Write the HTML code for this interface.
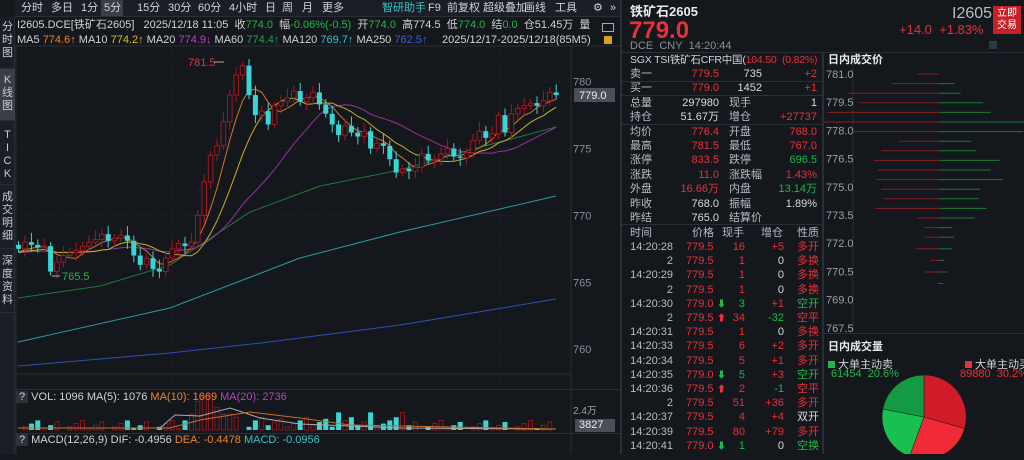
<!DOCTYPE html>
<html><head><meta charset="utf-8">
<style>
*{margin:0;padding:0;box-sizing:border-box}
body{width:1024px;height:454px;overflow:hidden;background:#14171c;font-family:"Liberation Sans","Noto Sans CJK SC",sans-serif;color:#d0d3d8;font-size:11px;position:relative}
.a{position:absolute;white-space:nowrap}
.r{color:#e8303a}.g{color:#1fb84a}.w{color:#d8dadf}.gr{color:#8a8f98}
.side{position:absolute;left:0;top:17px;width:15px;height:437px;background:#1b1e24;border-right:1px solid #2a2e36}
.side div{width:15px;text-align:center;font-size:11px;line-height:13px;color:#c8ccd2;border-bottom:1px solid #2a2e36;padding:2px 0}
.tb span{position:absolute;top:0;line-height:16px;font-size:11px;color:#d0d3d8}
.row{position:absolute;left:622px;width:200px;height:14px;font-size:11px;line-height:14px}
.row .l{position:absolute;left:8px;color:#b8bcc3}
.row .v{position:absolute;right:103px;text-align:right}
.row .l2{position:absolute;left:107px;color:#b8bcc3}
.row .v2{position:absolute;right:5px;text-align:right}
.tr{position:absolute;left:622px;width:200px;height:14px;font-size:11px;line-height:14px}
.tr span{position:absolute;text-align:right}
</style></head><body>
<!-- top toolbar -->
<div class="a tb" style="left:15px;top:0;height:17px;width:605px;background:#1b1e24;border-bottom:1px solid #2a2e36">
<span style="left:6px">分时</span><span style="left:36px">多日</span><span style="left:66px">1分</span><span style="left:86px;width:22px;height:16px;background:#3a3e46;padding-left:3px">5分</span><span style="left:122px">15分</span><span style="left:153px">30分</span><span style="left:183px">60分</span><span style="left:214px">4小时</span><span style="left:250px">日</span><span style="left:267px">周</span><span style="left:287px">月</span><span style="left:307px">更多</span>
<span style="left:367px;color:#2fc6c6">智研助手</span><span style="left:413px">F9</span><span style="left:432px">前复权</span><span style="left:468px">超级叠加</span><span style="left:509px">画线</span><span style="left:540px">工具</span><span style="left:578px">⚙</span><span style="left:595px">»</span>
</div>
<div class="side">
<div style="height:52px;padding-top:4px">分<br>时<br>图</div>
<div style="height:52px;background:#3a3e46;padding-top:5px">K<br>线<br>图</div>
<div style="height:64px;padding-top:8px">T<br>I<br>C<br>K</div>
<div style="height:64px;padding-top:6px">成<br>交<br>明<br>细</div>
<div style="height:64px;padding-top:6px">深<br>度<br>资<br>料</div>
</div>
<div class="a" style="left:17px;top:17px;font-size:11px;line-height:16px">I2605.DCE[铁矿石2605]&nbsp;&nbsp; 2025/12/18 11:05&nbsp; 收<span class="g">774.0</span>&nbsp; 幅<span class="g">-0.06%(-0.5)</span>&nbsp; 开<span class="g">774.0</span>&nbsp; 高774.5&nbsp; 低<span class="g">774.0</span>&nbsp; 结<span class="g">0.0</span>&nbsp; 仓51.45万&nbsp; 量</div>
<div class="a" style="left:17px;top:33px;font-size:11px;line-height:14px">MA5 <span style="color:#e8862a">774.6↑</span> MA10 <span style="color:#d6c12a">774.2↑</span> MA20 <span style="color:#c23ec2">774.9↓</span> MA60 <span style="color:#21a05a">774.4↑</span> MA120 <span style="color:#35c6c6">769.7↑</span> MA250 <span style="color:#3d5fd0">762.5↑</span></div>
<div class="a" style="left:442px;top:33px;font-size:11px;line-height:14px">2025/12/17-2025/12/18(85M5)</div>
<div class="a" style="left:602px;top:23px;width:12px;height:9px;border:1px solid #aaa"></div>
<div class="a" style="left:604px;top:36px;width:8px;height:8px;background:#d8a020"></div>
<svg class="a" style="left:0;top:0" width="620" height="454" id="ch"></svg>
<!-- VOL / MACD labels -->
<div class="a" style="left:16px;top:389px;width:604px;border-top:1px solid #2a2e36"></div>
<div class="a" style="left:16px;top:390px;font-size:11px;line-height:14px"><span style="background:#2e3138;padding:0 3px">?</span> VOL: 1096 MA(5): 1076 <span style="color:#e8862a">MA(10): 1669</span> <span style="color:#c23ec2">MA(20): 2736</span></div>
<div class="a" style="left:573px;top:402px;font-size:10px;color:#9aa0a8">2.4万</div>
<div class="a" style="left:575px;top:419px;width:40px;height:13px;background:#4a4e56;color:#eee;font-size:11px;line-height:13px;padding-left:4px">3827</div>
<div class="a" style="left:16px;top:433px;width:604px;border-top:1px solid #2a2e36"></div>
<div class="a" style="left:16px;top:433px;font-size:11px;line-height:14px"><span style="background:#2e3138;padding:0 3px">?</span> MACD(12,26,9) DIF: -0.4956 <span style="color:#e8862a">DEA: -0.4478</span> <span style="color:#35c6c6">MACD: -0.0956</span></div>
<!-- right panel -->
<div class="a" style="left:620px;top:0;width:2px;height:454px;background:#2a2e36"></div>
<div class="a" style="left:630px;top:4px;font-size:13px;font-weight:bold;color:#e8eaee;line-height:16px">铁矿石2605</div>
<div class="a r" style="left:629px;top:19px;font-size:24px;font-weight:bold;line-height:24px">779.0</div>
<div class="a gr" style="left:630px;top:40px;font-size:11px">DCE&nbsp; CNY&nbsp; 14:20:44</div>
<div class="a" style="left:952px;top:5px;font-size:16px;color:#b8bcc3">I2605</div>
<div class="a" style="left:993px;top:6px;width:28px;height:28px;background:#c8202a;color:#fff;font-size:10px;line-height:12px;text-align:center;padding-top:2px">立即<br>交易</div>
<div class="a r" style="left:899px;top:22px;font-size:13px">+14.0&nbsp; +1.83%</div>
<div class="a" style="left:989px;top:41px;width:8px;height:8px;background:#2a3a44"></div>
<div class="a" style="left:622px;top:52px;width:402px;border-top:1px solid #2a2e36"></div>
<div class="a" style="left:822px;top:52px;width:2px;height:402px;background:#2a2e36"></div>
<div class="a" style="left:630px;top:53px;font-size:10.5px;line-height:14px;letter-spacing:-0.2px">SGX TSI铁矿石CFR中国(<span class="r">104.50&nbsp; (0.82%)</span></div>
<div class="a" style="left:828px;top:53px;font-size:11px;font-weight:bold;color:#e8eaee;line-height:14px">日内成交价</div>
<div id="rows"></div>
<div class="a" style="left:622px;top:81px;width:200px;border-top:1px solid #2a2e36"></div>
<div class="a" style="left:622px;top:95px;width:200px;border-top:1px solid #2a2e36"></div>
<div class="a" style="left:622px;top:124px;width:200px;border-top:1px solid #2a2e36"></div>
<div class="a" style="left:622px;top:224px;width:200px;border-top:1px solid #2a2e36"></div>
<div id="trades"></div>
<svg class="a" style="left:824px;top:60px" width="200" height="400" id="dp"></svg>
<div class="a" style="left:824px;top:333px;width:200px;border-top:1px solid #2a2e36"></div>
<div class="a" style="left:828px;top:338px;font-size:11px;font-weight:bold;color:#e8eaee">日内成交量</div>
<div class="a" style="left:828px;top:356px;font-size:11px"><span style="display:inline-block;width:7px;height:7px;background:#1fb84a"></span> 大单主动卖</div>
<div class="a g" style="left:831px;top:368px;font-size:11px">61454&nbsp; 20.6%</div>
<div class="a" style="left:965px;top:356px;font-size:11px"><span style="display:inline-block;width:7px;height:7px;background:#e8303a"></span> 大单主动买</div>
<div class="a r" style="left:960px;top:368px;font-size:11px">89880&nbsp; 30.2%</div>
<svg class="a" style="left:824px;top:370px" width="200" height="84">
<g transform="translate(100,47)">
<path d="M0,0 L0,-42 A42,42 0 0 1 40.6,11.5 Z" fill="#d01c28" stroke="#14171c" stroke-width=".5"/>
<path d="M0,0 L40.6,11.5 A42,42 0 0 1 -14.5,39.4 Z" fill="#f02a36" stroke="#14171c" stroke-width=".5"/>
<path d="M0,0 L-14.5,39.4 A42,42 0 0 1 -41.2,-8 Z" fill="#18c050" stroke="#14171c" stroke-width=".5"/>
<path d="M0,0 L-41.2,-8 A42,42 0 0 1 0,-42 Z" fill="#149a42" stroke="#14171c" stroke-width=".5"/>
</g></svg>
<script>
var C=[767.5,768,767.8,767.6,767.7,765.8,766.5,767,767.2,767.4,767.7,768,768.2,768.6,768.1,768.3,768.5,768.1,767,766.3,766.8,766,765.8,766.8,767.5,767.9,767.7,768,770,772.5,774.5,775.2,777,779,780.5,781.2,779,777.5,777.8,776.8,778.2,778.5,778.8,779.3,778.5,778.8,779.2,778.3,777.6,776.8,776,776.7,776.2,775.9,776.3,775,775.4,775.2,774.2,773.2,773.5,773.3,773.6,774.6,774.1,774.2,774.6,775,774.4,774.3,774.7,775.6,776.3,775.8,776.1,777.5,776.2,777.6,778,778.2,778.4,778.2,778.6,779.2,779.0];
function Y(p){return 81.7+(780-p)*13.37}
function X(i){return 18.6+i*6.4}
var s='';
s+='<line x1="15" y1="46" x2="620" y2="46" stroke="#2a2e36"/>';
[780,775,770,765,760].forEach(function(p){s+='<line x1="16" y1="'+Y(p)+'" x2="571" y2="'+Y(p)+'" stroke="#22262d" stroke-dasharray="1,2"/><text x="573" y="'+(Y(p)+4)+'" fill="#8a8f98" font-size="11" font-family="Liberation Sans">'+p+'</text>'});
[172,500].forEach(function(x){s+='<line x1="'+x+'" y1="46" x2="'+x+'" y2="385" stroke="#22262d" stroke-dasharray="1,2"/>'});
s+='<line x1="571" y1="46" x2="571" y2="454" stroke="#2a2e36"/><line x1="16" y1="46" x2="16" y2="454" stroke="#2a2e36"/>';
s+='<line x1="16" y1="374" x2="571" y2="374" stroke="#2a2e36"/>';
function pl(pts,c){return '<polyline fill="none" stroke="'+c+'" stroke-width="1" points="'+pts+'"/>'}
s+=pl('18,298 100,286 170,265 250,212 320,186 400,170 470,150 556,127','#1f7a3e');
s+=pl('18,342 170,308 300,258 400,232 556,196','#2a9aa0');
s+=pl('18,366 170,353 261,343 400,325 556,299','#3050b0');
function ma(n){var o=[];for(var i=0;i<C.length;i++){var t=0;for(var k=0;k<n;k++){var j=i-k;t+=j>=0?C[j]:767.2}o.push(X(i)+','+Y(t/n).toFixed(1))}return o.join(' ')}
s+=pl(ma(20),'#9a30a0');s+=pl(ma(10),'#c8b028');s+=pl(ma(5),'#d0782a');
for(var i=0;i<C.length;i++){var o=i?C[i-1]:767.8,c=C[i],h=Math.max(o,c)+0.3+((i*7)%5)*0.1,l=Math.min(o,c)-0.3-((i*3)%4)*0.1;
if(i==35)h=781.5;if(i==5)l=765.5;
var x=X(i),col=c>o?'#a01822':(c<o?'#3ad6d6':'#d8dadf');
s+='<line x1="'+x+'" y1="'+Y(h)+'" x2="'+x+'" y2="'+Y(l)+'" stroke="'+col+'"/>';
var t=Y(Math.max(o,c)),b=Y(Math.min(o,c));if(b-t<1)b=t+1;
if(c>o)s+='<rect x="'+(x-2.3)+'" y="'+t+'" width="4.6" height="'+(b-t)+'" fill="#14171c" stroke="#a01822"/>';
else s+='<rect x="'+(x-2.5)+'" y="'+t+'" width="5" height="'+(b-t)+'" fill="'+col+'"/>';
var v=(i>=26&&i<=34)?[6,10,18,22,22,14,10,10,8][i-26]:((i*37)%7)+(i>36&&i<60?2:0);if(i==55||i==60||i==50)v=11;
var vc=c>o?'#a01822':'#3ad6d6';
if(c>o)s+='<rect x="'+(x-2)+'" y="'+(430-v*1.6)+'" width="4" height="'+(v*1.6)+'" fill="none" stroke="'+vc+'" stroke-width=".8"/>';
else s+='<rect x="'+(x-2.5)+'" y="'+(430-v*1.6)+'" width="5" height="'+(v*1.6)+'" fill="'+vc+'"/>';
}
s+='<text x="188" y="66" fill="#e8303a" font-size="11" font-family="Liberation Sans">781.5</text><line x1="214" y1="62" x2="224" y2="62" stroke="#aaa"/>';
s+='<text x="62" y="280" fill="#1fb84a" font-size="11" font-family="Liberation Sans">765.5</text><line x1="52" y1="276" x2="60" y2="276" stroke="#aaa"/>';
s+='<rect x="574" y="88" width="41" height="14" fill="#4a4e56"/><text x="579" y="99" fill="#eee" font-size="11" font-family="Liberation Sans">779.0</text>';
s+=pl('18,428 160,428 175,415 200,416 230,408 260,418 300,424 400,428 556,429','#aaa');
s+=pl('18,428 170,428 200,420 250,412 300,418 350,425 556,429','#c87028');
document.getElementById('ch').innerHTML=s;
var R=[['卖一','779.5','r','735','w','+2','r'],['买一','779.0','r','1452','w','+1','r'],['总量','297980','w','现手','','1','w'],['持仓','51.67万','w','增仓','','+27737','r'],['均价','776.4','r','开盘','','768.0','r'],['最高','781.5','r','最低','','767.0','r'],['涨停','833.5','r','跌停','','696.5','g'],['涨跌','11.0','r','涨跌幅','','1.43%','r'],['外盘','16.66万','r','内盘','','13.14万','g'],['昨收','768.0','w','振幅','','1.89%','w'],['昨结','765.0','w','结算价','','','w']];
var h='';R.forEach(function(r,i){var y=67+i*14.4;
if(i<2){h+='<div class="row" style="top:'+y+'px"><span class="l">'+r[0]+'</span><span class="v r">'+r[1]+'</span><span class="v2 w" style="right:60px">'+r[3]+'</span><span class="v2 r">'+r[5]+'</span></div>'}
else h+='<div class="row" style="top:'+y+'px"><span class="l">'+r[0]+'</span><span class="v '+r[2]+'">'+r[1]+'</span><span class="l2">'+r[3]+'</span><span class="v2 '+r[6]+'">'+r[5]+'</span></div>'});
document.getElementById('rows').innerHTML=h;
var T=[['14:20:28','779.5','','16','+5','多开','r'],['2','779.5','','1','0','多换','r'],['14:20:29','779.5','','1','0','多换','r'],['2','779.5','','1','0','多换','r'],['14:20:30','779.0','g','3','+1','空开','g'],['2','779.5','r','34','-32','空平','r'],['14:20:31','779.5','','1','0','多换','r'],['14:20:33','779.5','','6','+2','多开','r'],['14:20:34','779.5','','5','+1','多开','r'],['14:20:35','779.0','g','5','+3','空开','g'],['14:20:36','779.5','r','2','-1','空平','r'],['2','779.5','','51','+36','多开','r'],['14:20:37','779.5','','4','+4','双开','w'],['14:20:39','779.5','','80','+79','多开','r'],['14:20:41','779.0','g','1','0','空换','g']];
h='<div class="tr" style="top:226px;color:#b8bcc3"><span style="left:8px">时间</span><span style="right:108px">价格</span><span style="right:78px">现手</span><span style="right:39px">增仓</span><span style="right:3px">性质</span></div>';
T.forEach(function(t,i){var y=240+i*14.2;var vc=t[2]=='g'?'g':'r';var zc=t[4]=='0'?'w':(t[4][0]=='-'?'g':'r');
h+='<div class="tr" style="top:'+y+'px"><span style="right:149px;color:#b8bcc3">'+t[0]+'</span><span class="r" style="left:64px">'+t[1]+'</span>'+(t[2]?'<span class="'+t[2]+'" style="left:95px;font-size:9px">'+(t[2]=='g'?'⬇':'⬆')+'</span>':'')+'<span class="'+vc+'" style="right:77px">'+t[3]+'</span><span class="'+zc+'" style="right:38px">'+t[4]+'</span><span class="'+t[6]+'" style="right:3px">'+t[5]+'</span></div>'});
document.getElementById('trades').innerHTML=h;
var d='<line x1="29" y1="0" x2="29" y2="272" stroke="#2a2e36"/>';
['781.0','779.5','778.0','776.5','775.0','773.5','772.0','770.5','769.0','767.5'].forEach(function(p,i){d+='<text x="2" y="'+(18+i*28.2)+'" fill="#9aa0a8" font-size="11" font-family="Liberation Sans">'+p+'</text>'});
var B=[[15,0],[33,14],[63,20],[55,41],[77,48],[85,80],[60,78],[28,30],[40,34],[45,56],[42,48],[43,59],[40,38],[38,37],[44,44],[15,33],[10,12],[10,14],[16,12],[6,5],[10,8],[1,4]];
B.forEach(function(b,i){var y=14+i*9.6+(i>17?(i-17)*2:0);d+='<line x1="'+(115-b[0]*1.45)+'" y1="'+y+'" x2="115" y2="'+y+'" stroke="#8a1c24"/><line x1="115" y1="'+y+'" x2="'+(115+b[1]*1.08)+'" y2="'+y+'" stroke="#1c7a36"/>'});
document.getElementById('dp').innerHTML=d;
</script>
</body></html>
